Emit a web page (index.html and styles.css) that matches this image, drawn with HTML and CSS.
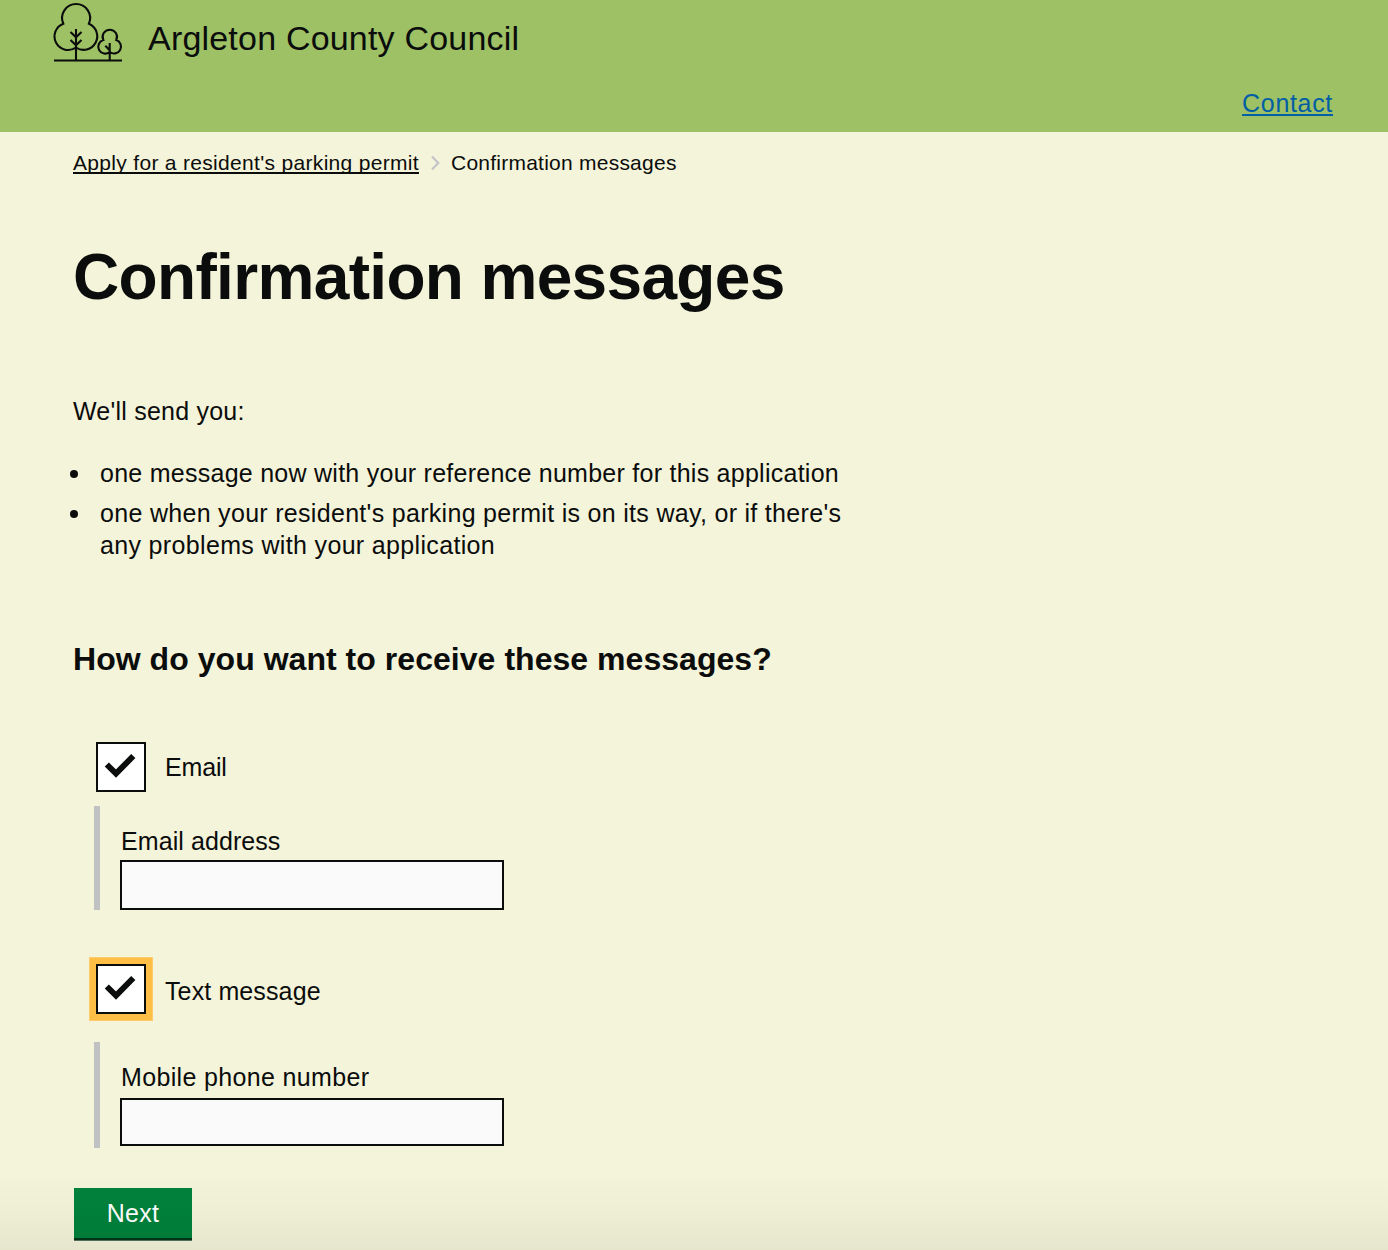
FILE: index.html
```html
<!DOCTYPE html>
<html lang="en">
<head>
<meta charset="utf-8">
<title>Confirmation messages</title>
<link rel="stylesheet" href="styles.css">
</head>
<body>
<header class="header">
  <div class="brand">
    <svg class="logo" width="72" height="64" viewBox="0 0 72 64" fill="none" stroke="#0b0c0c" stroke-width="2.1">
      <path d="M2 60.500H70M24 61V29M18.500 32L24 37.300L29.500 32M18.500 40L24 45.300L29.500 40"/>
      <path d="M24 47.500A13.600 13.600 0 1 1 11.300 23.700A14 14 0 1 1 36.900 23.700A13.600 13.600 0 1 1 24 47.500"/>
      <path d="M57.700 61V43M53.300 45.700L57.700 50.300M57.700 52A6.950 6.950 0 1 1 51.300 40A7.200 7.200 0 1 1 64.300 40A6.950 6.950 0 1 1 57.700 52"/>
    </svg>
    <span class="brand-name">Argleton County Council</span>
  </div>
  <nav class="nav"><a class="nav-link" href="#">Contact</a></nav>
</header>
<main class="main">
  <nav class="breadcrumbs">
    <a class="crumb-link" href="#">Apply for a resident's parking permit</a>
    <svg class="chevron" width="9" height="16" viewBox="0 0 9 16" fill="none" stroke="#c4c4c8" stroke-width="2.200"><path d="M1 1.500L7.300 8L1 14.500"/></svg>
    <span class="crumb-current">Confirmation messages</span>
  </nav>
  <h1 class="title">Confirmation messages</h1>
  <p class="intro">We'll send you:</p>
  <ul class="list">
    <li class="item item-one">one message now with your reference number for this application</li>
    <li class="item"><span class="line-one">one when your resident's parking permit is on its way, or if there's</span><br><span class="line-two">any problems with your application</span></li>
  </ul>
  <h2 class="question">How do you want to receive these messages?</h2>
  <form class="form">
    <label class="option">
      <span class="box"><svg width="46" height="46" viewBox="0 0 46 46" fill="none" stroke="#0b0c0c" stroke-width="5.900"><path d="M8.800 20.500L18 29.600L35.300 12"/></svg></span>
      <span class="option-text email">Email</span>
    </label>
    <div class="conditional conditional-email">
      <label class="field-label address" for="email">Email address</label>
      <input class="input" id="email" type="text">
    </div>
    <label class="option option-text-message">
      <span class="box focused"><svg width="46" height="46" viewBox="0 0 46 46" fill="none" stroke="#0b0c0c" stroke-width="5.900"><path d="M8.800 20.500L18 29.600L35.300 12"/></svg></span>
      <span class="option-text message">Text message</span>
    </label>
    <div class="conditional conditional-phone">
      <label class="field-label mobile" for="phone">Mobile phone number</label>
      <input class="input input-phone" id="phone" type="text">
    </div>
    <button class="button" type="button">Next</button>
  </form>
</main>
<div class="fade"></div>
</body>
</html>
```
FILE: styles.css
```css
* { box-sizing: border-box; }
body {
  position: relative;
  margin: 0;
  height: 1250px;
  overflow: hidden;
  background: #f4f4da;
  color: #0b0c0c;
  font: 25px/32px "Liberation Sans", Arial, sans-serif;
}
h1, h2, p, ul { margin: 0; padding: 0; }
.header { height: 132px; padding: 0 55px 0 52px; background: #9dc164; }
.brand { display: flex; height: 88px; }
.logo { flex: none; }
.brand-name { margin: 18px 0 0 24px; font-size: 34px; line-height: 40px; letter-spacing: 0.2px; }
.nav { display: flex; justify-content: flex-end; }
.nav-link { color: #005ea5; line-height: 30px; letter-spacing: 0.68px; text-decoration: underline; text-decoration-thickness: 2px; text-underline-offset: 2px; text-decoration-skip-ink: none; }
.main { padding: 16px 0 0 73px; }
.breadcrumbs { display: flex; align-items: center; height: 30px; font-size: 21px; line-height: 30px; white-space: nowrap; }
.crumb-link { color: #0b0c0c; letter-spacing: 0.315px; text-decoration-thickness: 2px; text-underline-offset: 2px; text-decoration-skip-ink: none; }
.crumb-current { letter-spacing: 0.24px; }
.chevron { margin: 0 11px 0 12px; }
.title { margin-top: 64px; font-size: 64px; line-height: 70px; letter-spacing: -0.66px; white-space: nowrap; }
.intro { margin-top: 83px; letter-spacing: 0.22px; }
.list { margin-top: 30px; padding-left: 27px; list-style: none; white-space: nowrap; }
.item { position: relative; margin-bottom: 8px; }
.item-one { letter-spacing: 0.26px; }
.line-one { letter-spacing: 0.305px; }
.line-two { letter-spacing: 0.34px; }
.item::before { content: ""; position: absolute; left: -30px; top: 13px; width: 8px; height: 8px; border-radius: 50%; background: #0b0c0c; }
.question { margin-top: 78px; font-size: 32px; line-height: 40px; letter-spacing: 0.04px; white-space: nowrap; }
.form { margin-top: 63px; }
.option { display: flex; height: 50px; margin-left: 23px; }
.option-text-message { margin-top: 54px; }
.box { width: 50px; height: 50px; border: 2px solid #0b0c0c; background: #fff; }
.box svg { display: block; }
.focused { box-shadow: 0 0 0 6px #ffbf47, 0 0 0 7px #fdcb6b; }
.option-text { margin: 9px 0 0 19px; }
.email { letter-spacing: -0.15px; }
.message { margin-top: 11px; letter-spacing: 0.12px; }
.conditional { display: flex; flex-direction: column; align-items: flex-start; margin-left: 21px; padding-left: 20px; border-left: 6px solid #bfc1c3; }
.conditional-email { height: 104px; margin-top: 14px; padding-top: 19px; }
.conditional-phone { height: 106px; margin-top: 28px; padding-top: 19px; }
.field-label { height: 35px; margin-left: 1px; white-space: nowrap; }
.address { letter-spacing: 0.08px; }
.mobile { height: 37px; letter-spacing: 0.35px; }
.input { width: 384px; height: 50px; margin: 0; border: 2px solid #0b0c0c; border-radius: 0; background: #fafafa; font: inherit; }
.input-phone { height: 48px; }
.button { display: block; width: 118px; height: 50px; margin: 40px 0 0 1px; padding: 0; border: 0; background: #00823b; box-shadow: 0 2px 0 #003618, 0 3px 0 #547260; color: #fff; font: inherit; letter-spacing: 0.3px; }
.fade { position: absolute; left: 0; right: 0; bottom: 0; height: 85px; background: linear-gradient(rgba(0,0,0,0), rgba(0,0,0,.02) 50%, rgba(0,0,0,.06)); pointer-events: none; }
```
